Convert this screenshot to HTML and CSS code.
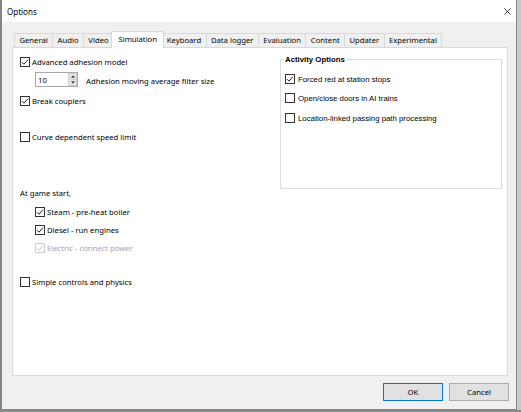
FILE: index.html
```html
<!DOCTYPE html>
<html>
<head>
<meta charset="utf-8">
<title>Options</title>
<link rel="stylesheet" href="styles.css">
</head>
<body>
<div class="window">
  <div class="titlebar">
    <span class="title">Options</span>
    <svg class="close" viewBox="0 0 8 8"><path d="M0.5 0.5 L7.5 7.5 M7.5 0.5 L0.5 7.5" stroke="#111" stroke-width="0.9" fill="none"/></svg>
  </div>
  <div class="client">
    <div class="tabs">
      <div class="tab">General</div>
      <div class="tab">Audio</div>
      <div class="tab">Video</div>
      <div class="tab active">Simulation</div>
      <div class="tab">Keyboard</div>
      <div class="tab">Data logger</div>
      <div class="tab">Evaluation</div>
      <div class="tab">Content</div>
      <div class="tab">Updater</div>
      <div class="tab">Experimental</div>
    </div>
    <div class="panel">
      <div class="col-left">
        <div class="check">
          <svg class="cb" viewBox="0 0 10 10"><rect x="0.5" y="0.5" width="9" height="9" fill="#fff" stroke="#333"/><path d="M2 5.2 L4 7.2 L8 2.6" fill="none" stroke="#222" stroke-width="1"/></svg>
          <span>Advanced adhesion model</span>
        </div>
        <div class="numrow">
          <div class="updown">
            <span class="val">10</span>
            <div class="spin">
              <span class="sbtn"><svg viewBox="0 0 5 3"><path d="M0 3 L2.5 0 L5 3 Z" fill="#444"/></svg></span>
              <span class="sbtn"><svg viewBox="0 0 5 3"><path d="M0 0 L2.5 3 L5 0 Z" fill="#444"/></svg></span>
            </div>
          </div>
          <span class="numlabel">Adhesion moving average filter size</span>
        </div>
        <div class="check row-break">
          <svg class="cb" viewBox="0 0 10 10"><rect x="0.5" y="0.5" width="9" height="9" fill="#fff" stroke="#333"/><path d="M2 5.2 L4 7.2 L8 2.6" fill="none" stroke="#222" stroke-width="1"/></svg>
          <span>Break couplers</span>
        </div>
        <div class="check row-curve">
          <svg class="cb" viewBox="0 0 10 10"><rect x="0.5" y="0.5" width="9" height="9" fill="#fff" stroke="#333"/></svg>
          <span>Curve dependent speed limit</span>
        </div>
        <div class="label row-start">At game start,</div>
        <div class="check sub row-steam">
          <svg class="cb" viewBox="0 0 10 10"><rect x="0.5" y="0.5" width="9" height="9" fill="#fff" stroke="#333"/><path d="M2 5.2 L4 7.2 L8 2.6" fill="none" stroke="#222" stroke-width="1"/></svg>
          <span>Steam - pre-heat boiler</span>
        </div>
        <div class="check sub row-diesel">
          <svg class="cb" viewBox="0 0 10 10"><rect x="0.5" y="0.5" width="9" height="9" fill="#fff" stroke="#333"/><path d="M2 5.2 L4 7.2 L8 2.6" fill="none" stroke="#222" stroke-width="1"/></svg>
          <span>Diesel - run engines</span>
        </div>
        <div class="check sub disabled row-electric">
          <svg class="cb" viewBox="0 0 10 10"><rect x="0.5" y="0.5" width="9" height="9" fill="#fff" stroke="#cccccc"/><path d="M2 5.2 L4 7.2 L8 2.6" fill="none" stroke="#c4c4c4" stroke-width="1"/></svg>
          <span>Electric - connect power</span>
        </div>
        <div class="check row-simple">
          <svg class="cb" viewBox="0 0 10 10"><rect x="0.5" y="0.5" width="9" height="9" fill="#fff" stroke="#333"/></svg>
          <span>Simple controls and physics</span>
        </div>
      </div>
      <div class="group">
        <span class="legend">Activity Options</span>
        <div class="gcheck">
          <svg class="cb" viewBox="0 0 10 10"><rect x="0.5" y="0.5" width="9" height="9" fill="#fff" stroke="#333"/><path d="M2 5.2 L4 7.2 L8 2.6" fill="none" stroke="#222" stroke-width="1"/></svg>
          <span>Forced red at station stops</span>
        </div>
        <div class="gcheck g2">
          <svg class="cb" viewBox="0 0 10 10"><rect x="0.5" y="0.5" width="9" height="9" fill="#fff" stroke="#333"/></svg>
          <span>Open/close doors in AI trains</span>
        </div>
        <div class="gcheck g3">
          <svg class="cb" viewBox="0 0 10 10"><rect x="0.5" y="0.5" width="9" height="9" fill="#fff" stroke="#333"/></svg>
          <span>Location-linked passing path processing</span>
        </div>
      </div>
    </div>
    <div class="buttons">
      <button class="btn default">OK</button>
      <button class="btn">Cancel</button>
    </div>
  </div>
</div>
<div class="desk-bottom"></div>
</body>
</html>
```

FILE: styles.css
```css
* { box-sizing: border-box; }
html, body { margin: 0; padding: 0; }
body {
  width: 521px;
  height: 412px;
  overflow: hidden;
  background: #c9c9c9;
  font-family: "Noto Sans", "Open Sans", sans-serif;
  font-size: 7.7px;
  color: #000;
}
.window {
  width: 517px;
  height: 410px;
  display: flex;
  flex-direction: column;
  background: #f0f0f0;
  border-left: 2px solid #858585;
  border-right: 1px solid #858585;
  border-bottom: 1px solid #858585;
}
.titlebar {
  flex: none;
  height: 22px;
  background: #fff;
  display: flex;
  align-items: center;
  justify-content: space-between;
  padding: 0 5px 0 5px;
}
.title { font-size: 8px; }
.close { width: 7px; height: 7px; }
.client {
  flex: 1;
  display: flex;
  flex-direction: column;
  padding: 9px 8px 0 10px;
}
.tabs {
  display: flex;
  align-items: flex-end;
  height: 16px;
  padding-left: 3px;
  position: relative;
  z-index: 1;
}
.tab {
  height: 14px;
  line-height: 13px;
  padding: 0 4.4px;
  border: 1px solid #d9d9d9;
  border-bottom: none;
  margin-left: -1px;
  background: #f0f0f0;
  white-space: nowrap;
}
.tab.active {
  height: 17px;
  margin: 0 -2px -1px -3px;
  padding: 0 6.4px;
  background: #fff;
  line-height: 14px;
  position: relative;
  z-index: 2;
}
.panel {
  height: 329px;
  background: #fff;
  border: 1px solid #d9d9d9;
  display: grid;
  grid-template-columns: 260px 222px;
  align-items: start;
  padding-left: 7px;
}
.col-left { padding-top: 7px; }
.check {
  display: flex;
  align-items: center;
  height: 14px;
  white-space: nowrap;
}
.cb { width: 10px; height: 10px; flex: none; margin-right: 2px; }
.sub { margin-left: 15px; }
.disabled { color: #a3a3a3; }
.numrow {
  display: flex;
  align-items: center;
  height: 15px;
  margin: 3px 0 0 15px;
}
.updown {
  width: 43px;
  height: 15px;
  border: 1px solid #a9a9a9;
  background: #fff;
  display: flex;
  align-items: center;
  justify-content: space-between;
  padding: 0 0 0 2px;
}
.spin {
  width: 9px;
  height: 13px;
  display: flex;
  flex-direction: column;
}
.sbtn {
  flex: 1;
  display: flex;
  align-items: center;
  justify-content: center;
  background: #e6e6e6;
  border: 1px solid #cfcfcf;
}
.sbtn + .sbtn { border-top: none; }
.sbtn svg { width: 4px; height: 3px; }
.numlabel { margin-left: 8px; margin-top: 3px; white-space: nowrap; }
.row-break { margin-top: 7px; }
.row-curve { margin-top: 22px; }
.label { height: 14px; line-height: 14px; }
.row-start { margin-top: 42px; }
.row-steam { margin-top: 5px; }
.row-diesel { margin-top: 4px; }
.row-electric { margin-top: 4px; }
.row-simple { margin-top: 20px; }
.group {
  position: relative;
  margin-top: 11px;
  height: 130px;
  border: 1px solid #dcdcdc;
  padding: 13px 0 0 4px;
  font-family: "Liberation Sans", Arial, sans-serif;
  font-size: 7.8px;
}
.legend {
  position: absolute;
  top: -6px;
  left: 3px;
  padding: 0 1px;
  background: #fff;
  font-weight: bold;
  line-height: 11px;
}
.gcheck {
  display: flex;
  align-items: center;
  height: 12px;
  white-space: nowrap;
}
.gcheck .cb { margin-right: 3px; }
.g2 { margin-top: 7px; }
.g3 { margin-top: 8px; }
.buttons {
  display: flex;
  justify-content: flex-end;
  gap: 6px;
  margin-top: 7px;
  margin-right: -1px;
}
.btn {
  width: 60px;
  height: 18px;
  padding: 0;
  background: #e1e1e1;
  border: 1px solid #adadad;
  font-family: inherit;
  font-size: 7.7px;
  color: #000;
}
.btn.default { border-color: #0078d7; }
.desk-bottom { height: 2px; background: #8a8a8a; }
```
